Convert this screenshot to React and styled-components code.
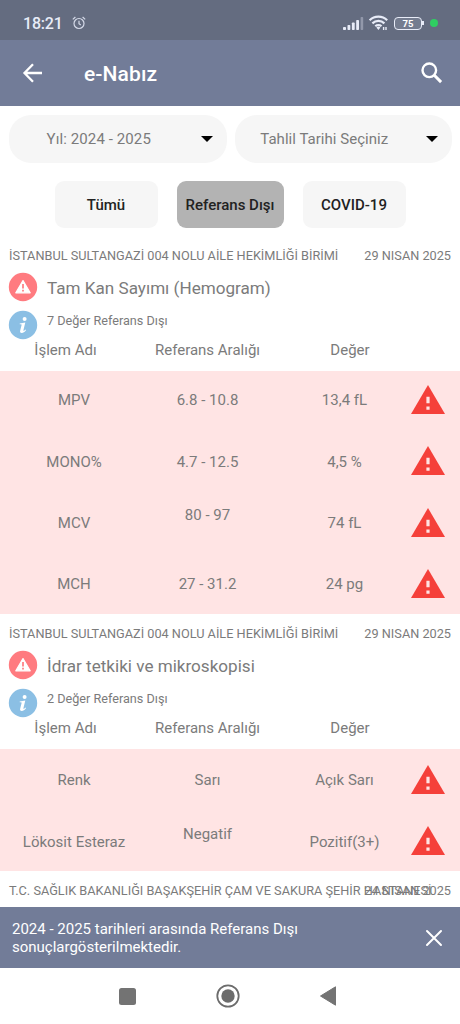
import * as React from "react"
import styled, { createGlobalStyle } from "styled-components"

const sections = [
  {
    place: "İSTANBUL SULTANGAZİ 004 NOLU AİLE HEKİMLİĞİ BİRİMİ",
    date: "29 NISAN 2025",
    title: "Tam Kan Sayımı (Hemogram)",
    info: "7 Değer Referans Dışı",
    rows: [
      { name: "MPV", range: "6.8 - 10.8", value: "13,4 fL", short: true },
      { name: "MONO%", range: "4.7 - 12.5", value: "4,5 %" },
      { name: "MCV", range: "80 - 97", value: "74 fL", raised: true },
      { name: "MCH", range: "27 - 31.2", value: "24 pg" },
    ],
  },
  {
    place: "İSTANBUL SULTANGAZİ 004 NOLU AİLE HEKİMLİĞİ BİRİMİ",
    date: "29 NISAN 2025",
    title: "İdrar tetkiki ve mikroskopisi",
    info: "2 Değer Referans Dışı",
    rows: [
      { name: "Renk", range: "Sarı", value: "Açık Sarı" },
      {
        name: "Lökosit Esteraz",
        range: "Negatif",
        value: "Pozitif(3+)",
        raised: true,
      },
    ],
  },
]

const AlarmIcon = () => (
  <svg width="14" height="14" viewBox="0 0 14 14" fill="none" stroke="#d5dae8">
    <circle cx="7" cy="7.5" r="5" strokeWidth="1.2" />
    <path d="M7 4.7v3l1.8 1.2M.8 3.4 3.4 1M13.2 3.4 10.6 1" strokeWidth="1.2" />
  </svg>
)

const SignalIcon = () => (
  <svg width="21" height="13" viewBox="0 0 21 13" fill="#e8ecf8">
    <rect x="0" y="10" width="3" height="3" rx=".8" />
    <rect x="4.5" y="8" width="2.8" height="5" rx=".8" />
    <rect x="8.9" y="5.5" width="2.8" height="7.5" rx=".8" />
    <rect x="13.2" y="3" width="2.8" height="10" rx=".8" />
    <rect x="17.6" y="0" width="2.6" height="13" rx=".8" opacity=".35" />
  </svg>
)

const WifiIcon = () => (
  <svg width="20" height="16" viewBox="0 0 20 16" fill="none" stroke="#e8ecf8">
    <path
      d="M.6 5.2a12.8 12.8 0 0 1 17.6 0M3.4 8.4a8.6 8.6 0 0 1 12 0M6.3 11.3a4.6 4.6 0 0 1 6.2 0"
      strokeWidth="2.2"
    />
    <path d="M7.4 12.4 9.4 15l2-2.6a3 3 0 0 0-4 0z" fill="#e8ecf8" stroke="none" />
    <path d="M14.6 15v-3M17 12v3" strokeWidth="1.4" />
  </svg>
)

const BackIcon = () => (
  <svg width="20" height="20" viewBox="0 0 20 20" fill="none" stroke="#fff">
    <path d="M19 10H2M10 1.3 1.5 10l8.5 8.7" strokeWidth="2.3" />
  </svg>
)

const SearchIcon = () => (
  <svg width="22" height="22" viewBox="0 0 22 22" fill="none" stroke="#fff">
    <circle cx="8.3" cy="8.3" r="6.8" strokeWidth="2.4" />
    <path d="m13.3 13.3 6.8 6.8" strokeWidth="3" />
  </svg>
)

const AlertIcon = () => (
  <svg width="28" height="28" viewBox="0 0 28 28">
    <circle cx="14" cy="14" r="14.2" fill="#ff7b80" />
    <path
      d="M14 7.6 21.2 19.8H6.8z"
      fill="#fff"
      stroke="#fff"
      strokeWidth="1.2"
      strokeLinejoin="round"
    />
    <path d="M14 11v4.6M14 16.8v1.7" stroke="#ff7b80" strokeWidth="1.7" />
  </svg>
)

const InfoIcon = () => (
  <svg width="28" height="28" viewBox="0 0 28 28">
    <circle cx="14" cy="14" r="14.2" fill="#8bbfe4" />
    <circle cx="15.6" cy="7.9" r="2" fill="#fff" />
    <path
      d="M10.7 12.4 16.3 11.5 14.4 19.3c-.2.9.5.8 2.1-.9l.6.6c-1.6 2.3-3.1 3.1-4.4 3-1.5-.1-1.9-1.2-1.5-2.6l1.4-5.4c.1-.6-.4-.7-1.9-.7z"
      fill="#fff"
    />
  </svg>
)

const WarningIcon = () => (
  <svg width="34" height="29" viewBox="0 0 34 29">
    <path d="M17 0 34 29H0z" fill="#f5403a" />
    <path d="M17 11.7v6.5M17 21.5v3.2" stroke="#ffe4e4" strokeWidth="3.2" />
  </svg>
)

const CloseIcon = () => (
  <svg width="16" height="16" viewBox="0 0 16 16" stroke="#fff">
    <path d="m1 1 14 14M15 1 1 15" strokeWidth="2" strokeLinecap="round" />
  </svg>
)

const Section = ({ place, date, title, info, rows }) => (
  <section>
    <Meta>
      <Place>{place}</Place>
      <span>{date}</span>
    </Meta>
    <TitleRow>
      <AlertIcon />
      <Title>{title}</Title>
    </TitleRow>
    <InfoRow>
      <InfoIcon />
      <InfoText>{info}</InfoText>
    </InfoRow>
    <TableHead>
      <Cell>İşlem Adı</Cell>
      <Cell>Referans Aralığı</Cell>
      <Cell>Değer</Cell>
    </TableHead>
    <TableBody>
      {rows.map(row => (
        <Row key={row.name} $short={row.short}>
          <Cell>{row.name}</Cell>
          <Cell $raised={row.raised}>{row.range}</Cell>
          <Cell>{row.value}</Cell>
          <WarningIcon />
        </Row>
      ))}
    </TableBody>
  </section>
)

const App = () => {
  return (
    <Screen>
      <GlobalStyle />
      <StatusBar>
        <Clock>18:21</Clock>
        <AlarmIcon />
        <StatusIcons>
          <SignalIcon />
          <WifiIcon />
          <Battery>75</Battery>
          <Dot />
        </StatusIcons>
      </StatusBar>
      <Header>
        <BackIcon />
        <Brand>e-Nabız</Brand>
        <SearchIcon />
      </Header>
      <Filters>
        <Select>
          <SelectText $spacing="0.1px">Yıl: 2024 - 2025</SelectText>
          <Caret />
        </Select>
        <Select>
          <SelectText $spacing="0.03px">Tahlil Tarihi Seçiniz</SelectText>
          <Caret />
        </Select>
      </Filters>
      <Tabs>
        <Tab>Tümü</Tab>
        <Tab $active>Referans Dışı</Tab>
        <Tab>COVID-19</Tab>
      </Tabs>
      <List>
        {sections.map(section => (
          <Section key={section.title} {...section} />
        ))}
        <Meta>
          <Place>T.C. SAĞLIK BAKANLIĞI BAŞAKŞEHİR ÇAM VE SAKURA ŞEHİR HASTANESİ</Place>
          <span>24 NISAN 2025</span>
        </Meta>
      </List>
      <Snackbar>
        <Message>
          2024 - 2025 tarihleri arasında Referans Dışı
          <br />
          sonuçlargösterilmektedir.
        </Message>
        <CloseIcon />
      </Snackbar>
      <NavBar>
        <svg width="17" height="17" viewBox="0 0 17 17">
          <rect width="17" height="17" rx="2.5" fill="#737373" />
        </svg>
        <svg width="24" height="24" viewBox="0 0 24 24">
          <circle cx="12" cy="12" r="10.7" fill="none" stroke="#6c6c6c" strokeWidth="1.8" />
          <circle cx="12" cy="12" r="6.7" fill="#6c6c6c" />
        </svg>
        <svg width="16" height="20" viewBox="0 0 16 20">
          <path d="M.5 10 15.5.8v18.4z" fill="#737373" stroke="#737373" strokeLinejoin="round" />
        </svg>
      </NavBar>
    </Screen>
  )
}

//style
const GlobalStyle = createGlobalStyle`
  * {
    box-sizing: border-box;
  }
  body {
    margin: 0;
    background: #fff;
    font-family: Roboto, sans-serif;
    color: #7b7b7b;
  }
  svg {
    display: block;
    flex: none;
    overflow: visible;
  }
`

const Screen = styled.div`
  width: 460px;
  height: 1024px;
  display: flex;
  flex-direction: column;
  overflow: hidden;
  white-space: nowrap;
`

const StatusBar = styled.div`
  height: 40px;
  flex: none;
  display: flex;
  align-items: center;
  padding: 6px 22px 0 23px;
  background: #646c80;
`

const Clock = styled.span`
  width: 49px;
  font-size: 16px;
  font-weight: 500;
  letter-spacing: -0.2px;
  color: #e8ecf8;
`

const StatusIcons = styled.div`
  display: flex;
  align-items: center;
  gap: 5px;
  margin-left: auto;
`

const Battery = styled.div`
  position: relative;
  width: 28px;
  height: 13px;
  margin-right: 3px;
  border: 1.5px solid #e8ecf8;
  border-radius: 4px;
  background: #747c8f;
  font-size: 9.5px;
  font-weight: 700;
  line-height: 11px;
  text-align: center;
  color: #fff;

  &::after {
    content: "";
    position: absolute;
    right: -3px;
    top: 3px;
    width: 2px;
    height: 4px;
    background: #e8ecf8;
  }
`

const Dot = styled.span`
  width: 8px;
  height: 8px;
  border-radius: 50%;
  background: #2fce62;
`

const Header = styled.header`
  height: 66px;
  flex: none;
  display: flex;
  align-items: center;
  padding: 0 17px 0 23px;
  background: #727c98;
`

const Brand = styled.h1`
  margin: 0 auto 0 41px;
  padding-top: 2px;
  font-size: 21px;
  font-weight: 500;
  letter-spacing: 0.1px;
  color: #fff;
`

const Filters = styled.div`
  display: flex;
  gap: 8px;
  padding: 9px 8px 0 9px;
`

const Select = styled.div`
  flex: 1;
  height: 48px;
  display: flex;
  align-items: center;
  padding-right: 14px;
  border-radius: 22px;
  background: #f6f6f6;
`

const SelectText = styled.span`
  flex: 1;
  padding-right: 12px;
  text-align: center;
  font-size: 15px;
  letter-spacing: ${props => props.$spacing};
`

const Caret = styled.span`
  border: 6px solid transparent;
  border-top-color: #000;
  border-bottom: 0;
`

const Tabs = styled.div`
  display: flex;
  justify-content: center;
  gap: 19px;
  padding-top: 18px;
`

const Tab = styled.div`
  width: ${props => (props.$active ? "107px" : "103px")};
  height: 47px;
  border-radius: 9px;
  background: ${props => (props.$active ? "#b3b3b3" : "#f6f6f6")};
  font-size: 15px;
  font-weight: 500;
  line-height: 48px;
  text-align: center;
  color: #222;
`

const List = styled.main`
  flex: 1;
  min-height: 0;
  overflow: hidden;
  padding-top: 8px;
`

const Meta = styled.div`
  display: flex;
  justify-content: space-between;
  height: 37px;
  padding: 0 9px;
  font-size: 12.72px;
  line-height: 40px;
`

const Place = styled.span`
  width: 340px;
`

const TitleRow = styled.div`
  display: flex;
  gap: 10px;
  height: 38px;
  padding-left: 9px;
`

const Title = styled.h2`
  margin: 0;
  font-size: 17.1px;
  font-weight: 400;
  line-height: 31px;
`

const InfoRow = styled.div`
  display: flex;
  gap: 10px;
  height: 28px;
  padding-left: 9px;
`

const InfoText = styled.span`
  font-size: 12.65px;
  line-height: 20px;
`

const TableHead = styled.div`
  display: grid;
  grid-template-columns: 131px 153px 132px;
  height: 31.5px;
  line-height: 22px;
`

const TableBody = styled.div`
  background: #ffe4e4;
`

const Cell = styled.span`
  text-align: center;
  font-size: 15px;
  margin-top: ${props => (props.$raised ? "-16px" : "0")};
`

const Row = styled.div`
  display: grid;
  grid-template-columns: 130px 137px 135px 34px;
  align-items: center;
  height: ${props => (props.$short ? "59.5px" : "61.4px")};
  padding: 0 0 ${props => (props.$short ? "1.9px" : "0")} 9px;

  ${Cell} {
    padding-top: 2px;
  }
  ${Cell}:nth-child(3) {
    padding-left: 2px;
  }
`

const Snackbar = styled.div`
  height: 61px;
  flex: none;
  display: flex;
  align-items: center;
  justify-content: space-between;
  padding: 0 18px 0 12px;
  background: #727c98;
`

const Message = styled.p`
  margin: 0;
  padding-top: 2px;
  font-size: 15px;
  line-height: 17.5px;
  color: #fff;
`

const NavBar = styled.nav`
  height: 56px;
  flex: none;
  display: flex;
  align-items: center;
  justify-content: space-between;
  padding: 0 124px 0 119px;
`

export default App
